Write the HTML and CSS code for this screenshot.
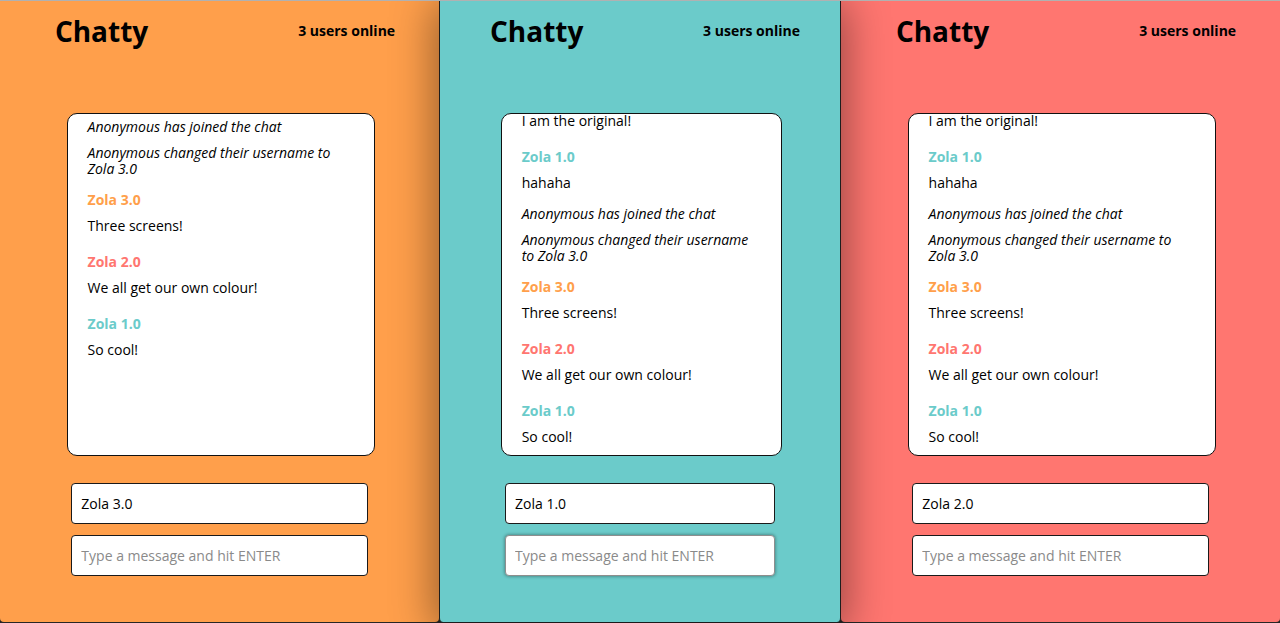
FILE: index.html
```html
<!DOCTYPE html>
<html lang="en">
<head>
<meta charset="utf-8">
<title>Chatty</title>
<link rel="stylesheet" href="styles.css">
</head>
<body>
<div class="desktop">

  <section class="window window--orange">
    <header class="topbar">
      <h1 class="brand">Chatty</h1>
      <span class="online">3 users online</span>
    </header>
    <div class="log log--top">
      <p class="notice">Anonymous has joined the chat</p>
      <p class="notice">Anonymous changed their username to Zola 3.0</p>
      <div class="message">
        <span class="name name--orange">Zola 3.0</span>
        <p class="text">Three screens!</p>
      </div>
      <div class="message">
        <span class="name name--red">Zola 2.0</span>
        <p class="text">We all get our own colour!</p>
      </div>
      <div class="message">
        <span class="name name--teal">Zola 1.0</span>
        <p class="text">So cool!</p>
      </div>
    </div>
    <div class="composer">
      <input class="field" type="text" value="Zola 3.0">
      <input class="field" type="text" placeholder="Type a message and hit ENTER">
    </div>
  </section>

  <section class="window window--teal">
    <header class="topbar">
      <h1 class="brand">Chatty</h1>
      <span class="online">3 users online</span>
    </header>
    <div class="log log--bottom">
      <div class="message">
        <p class="text">I am the original!</p>
      </div>
      <div class="message">
        <span class="name name--teal">Zola 1.0</span>
        <p class="text">hahaha</p>
      </div>
      <p class="notice">Anonymous has joined the chat</p>
      <p class="notice">Anonymous changed their username to Zola 3.0</p>
      <div class="message">
        <span class="name name--orange">Zola 3.0</span>
        <p class="text">Three screens!</p>
      </div>
      <div class="message">
        <span class="name name--red">Zola 2.0</span>
        <p class="text">We all get our own colour!</p>
      </div>
      <div class="message">
        <span class="name name--teal">Zola 1.0</span>
        <p class="text">So cool!</p>
      </div>
    </div>
    <div class="composer">
      <input class="field" type="text" value="Zola 1.0">
      <input class="field field--focus" type="text" placeholder="Type a message and hit ENTER">
    </div>
  </section>

  <section class="window window--red">
    <header class="topbar">
      <h1 class="brand">Chatty</h1>
      <span class="online">3 users online</span>
    </header>
    <div class="log log--bottom">
      <div class="message">
        <p class="text">I am the original!</p>
      </div>
      <div class="message">
        <span class="name name--teal">Zola 1.0</span>
        <p class="text">hahaha</p>
      </div>
      <p class="notice">Anonymous has joined the chat</p>
      <p class="notice">Anonymous changed their username to Zola 3.0</p>
      <div class="message">
        <span class="name name--orange">Zola 3.0</span>
        <p class="text">Three screens!</p>
      </div>
      <div class="message">
        <span class="name name--red">Zola 2.0</span>
        <p class="text">We all get our own colour!</p>
      </div>
      <div class="message">
        <span class="name name--teal">Zola 1.0</span>
        <p class="text">So cool!</p>
      </div>
    </div>
    <div class="composer">
      <input class="field" type="text" value="Zola 2.0">
      <input class="field" type="text" placeholder="Type a message and hit ENTER">
    </div>
  </section>

</div>
</body>
</html>
```

FILE: styles.css
```css
* { box-sizing: border-box; }

html, body {
  margin: 0;
  padding: 0;
  height: 100%;
  overflow: hidden;
}

body {
  font-family: "Open Sans", "Liberation Sans", sans-serif;
  font-size: 14px;
  color: #000;
  background: #2a2a2a;
}

.desktop {
  display: flex;
  height: 623px;
  border-top: 1px solid #b1b1b1;
  background: #262626;
  overflow: hidden;
}

.window {
  height: 621px;
  flex: 0 0 auto;
  display: flex;
  flex-direction: column;
  border-radius: 0 0 4px 4px;
}

.window--orange { width: 439px; background: #ff9f4b; }
.window--red    { width: 439px; background: #ff7670; }
.window--teal {
  width: 402px;
  background: #6bcbca;
  border-left: 1px solid #1d1d1d;
  border-right: 1px solid #1d1d1d;
  z-index: 2;
  box-shadow: 0 6px 44px 4px rgba(0, 0, 0, 0.42);
}

.topbar {
  display: flex;
  align-items: center;
  justify-content: space-between;
  height: 38px;
  margin-top: 11px;
  padding: 0 10% 0 12.5%;
}

.brand {
  margin: 0;
  font-size: 28px;
  line-height: 38px;
  font-weight: 700;
}

.online {
  font-size: 14px;
  font-weight: 700;
  line-height: 19px;
  margin-bottom: 2px;
}

.log {
  width: calc(70% + 1.5px);
  height: 343px;
  margin: 63px 0 0 calc(15% + 0.7px);
  background: #fff;
  border: 1px solid #111;
  border-radius: 10px;
  padding: 5px 20px 10px;
  overflow: hidden;
  display: flex;
  flex-direction: column;
}

.log--top { justify-content: flex-start; }
.log--bottom { justify-content: flex-end; }

.notice, .message { flex: 0 0 auto; margin: 0; }

.notice {
  font-style: italic;
  line-height: 16px;
}

.message {
  display: flex;
  flex-direction: column;
  gap: 10px;
}

.notice + .notice { margin-top: 10px; }
.notice + .message { margin-top: 15px; }
.message + .notice { margin-top: 15px; }
.message + .message { margin-top: 20px; }

.name {
  font-weight: 700;
  line-height: 16px;
}
.name--orange { color: #ff9f4b; }
.name--red    { color: #ff7670; }
.name--teal   { color: #6bcbca; }

.text {
  margin: 0;
  line-height: 16px;
}

.composer {
  margin-top: 27px;
  display: flex;
  flex-direction: column;
  align-items: center;
  gap: 11px;
}

.field {
  width: 67.5%;
  height: 41px;
  border: 1px solid #1a1a1a;
  border-radius: 4px;
  background: #fff;
  padding: 0 9px;
  font-family: "Open Sans", "Liberation Sans", sans-serif;
  font-size: 14px;
  color: #000;
  outline: none;
}

.field::placeholder { color: #8a8a8a; }

.field--focus {
  border-color: #8e8e8e;
  box-shadow: 0 0 3px 1px rgba(0, 0, 0, 0.28);
}
```
